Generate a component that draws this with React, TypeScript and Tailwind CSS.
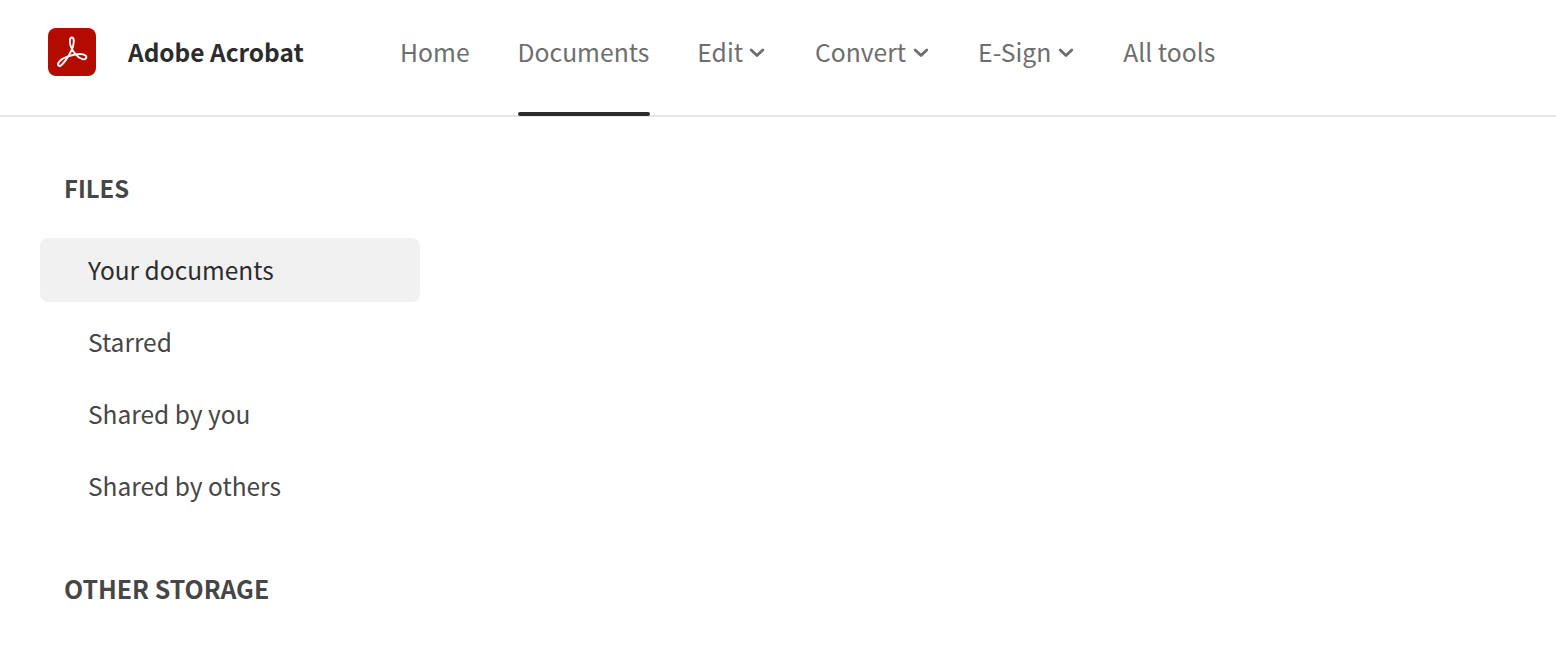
import React from "react";

const font = "font-['Noto_Sans_CJK_SC','Noto_Sans',sans-serif]";

function Chevron() {
  return (
    <svg width="16" height="10" viewBox="0 0 16 10" className="ml-[6.5px] mt-[3px] mr-[1.5px]" fill="none">
      <path d="M2.2 2 L8 7.6 L13.8 2" stroke="#6e6e6e" strokeWidth="2.8" strokeLinecap="round" strokeLinejoin="round" />
    </svg>
  );
}

function Logo() {
  return (
    <div className="w-[48px] h-[48px] rounded-[8px] bg-[#b30b00] flex items-center justify-center">
      <svg width="48" height="48" viewBox="0 0 48 48" fill="none">
        <path
          d="M10.5 37.5 C8.8 35.8 12 32 16 30 C21 27.5 33 24 37.5 27.5 C39.5 29.5 37.5 32 34.5 31.2 C29.5 30 24.5 23.5 22.5 17.5 C21.5 14 21.5 9.5 23.8 9.5 C26.5 9.5 26 14.5 25 18.5 C23.2 24.5 17.5 33 14.5 36 C13 37.7 11.5 38.5 10.5 37.5 Z"
          stroke="#ffffff"
          strokeWidth="1.9"
          strokeLinejoin="round"
        />
      </svg>
    </div>
  );
}

function NavItem({ label, chevron, active }: { label: string; chevron?: boolean; active?: boolean }) {
  return (
    <div className="relative h-full flex items-center pb-[13px]">
      <span className="text-[24.7px] leading-[32px] text-[#6e6e6e] whitespace-nowrap">{label}</span>
      {chevron && <Chevron />}
      {active && <div className="absolute left-0 right-[-1px] bottom-[-1px] h-[4px] rounded-[2px] bg-[#2c2c2c]" />}
    </div>
  );
}

function SideItem({ label, active }: { label: string; active?: boolean }) {
  return (
    <div
      className={`h-[64px] w-[380px] rounded-[8px] pl-[48px] pb-[1px] flex items-center text-[24.5px] leading-[32px] ${
        active ? "bg-[#f1f1f1] text-[#2c2c2c]" : "text-[#464646]"
      }`}
    >
      {label}
    </div>
  );
}

export default function App() {
  return (
    <div className={`w-[1556px] h-[651px] overflow-hidden bg-white ${font}`}>
      <header className="h-[117px] border-b-2 border-[#e8e8e8] flex items-stretch pl-[48px]">
        <div className="flex items-center pb-[11px]">
          <Logo />
          <span className="ml-[32px] text-[24.4px] leading-[32px] font-semibold text-[#2c2c2c] whitespace-nowrap">Adobe Acrobat</span>
        </div>
        <nav className="ml-[96.4px] flex items-stretch gap-[48px]">
          <NavItem label="Home" />
          <NavItem label="Documents" active />
          <NavItem label="Edit" chevron />
          <NavItem label="Convert" chevron />
          <NavItem label="E-Sign" chevron />
          <NavItem label="All tools" />
        </nav>
      </header>
      <aside className="pl-[40px] pt-[53px]">
        <div className="pl-[24px] h-[36px] flex items-center text-[23.8px] leading-[32px] font-semibold text-[#464646]">FILES</div>
        <div className="mt-[32px] flex flex-col gap-[8px]">
          <SideItem label="Your documents" active />
          <SideItem label="Starred" />
          <SideItem label="Shared by you" />
          <SideItem label="Shared by others" />
        </div>
        <div className="mt-[52px] pl-[24px] h-[36px] flex items-center text-[24.9px] leading-[32px] font-semibold text-[#464646]">OTHER STORAGE</div>
      </aside>
    </div>
  );
}
